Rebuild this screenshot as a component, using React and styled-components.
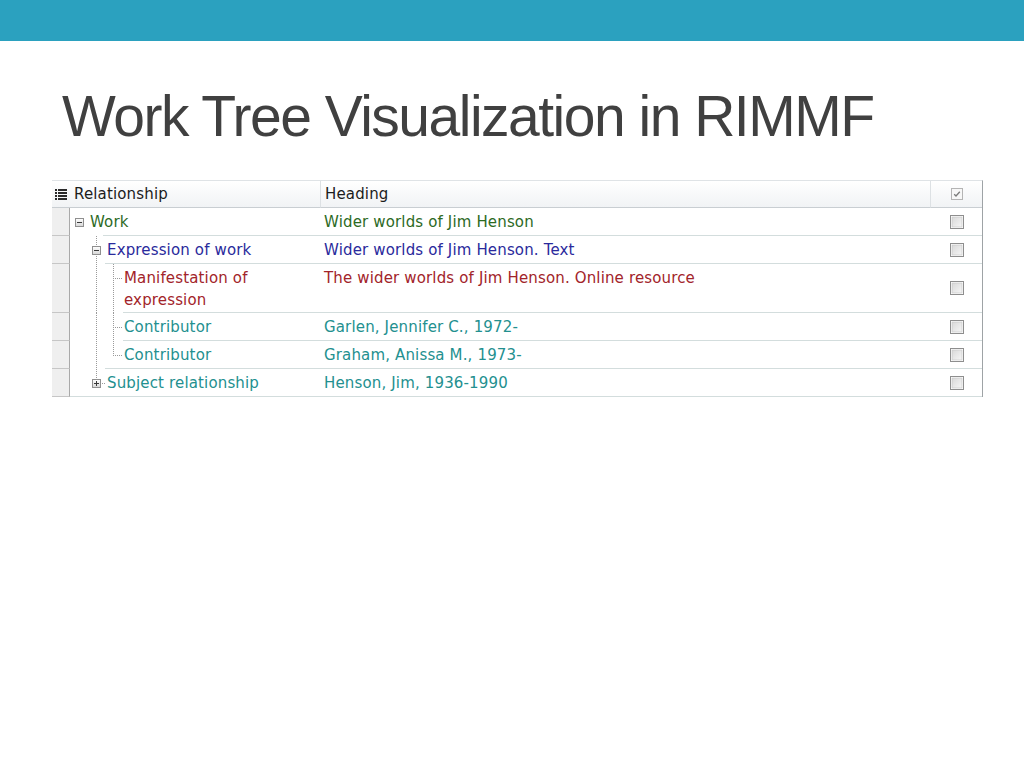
import React from "react";
import styled, { createGlobalStyle } from "styled-components";

const GlobalStyle = createGlobalStyle`
  body {
    margin: 0;
    background: #fff;
  }
`;

const Page = styled.div`
  width: 1024px;
  height: 768px;
  background: #fff;
  overflow: hidden;
`;

const TopBar = styled.div`
  height: 41px;
  background: #2ba1bf;
`;

const Title = styled.h1`
  margin: 42px 0 0 62px;
  font-family: "Liberation Sans", Arial, sans-serif;
  font-weight: 400;
  font-size: 57px;
  line-height: 66px;
  letter-spacing: -1.5px;
  color: #404040;
`;

const Grid = styled.div`
  margin: 31px 0 0 52px;
  width: 930px;
  border-top: 1px solid #dfe3e6;
  border-right: 1px solid #9ea3a6;
  font-family: "DejaVu Sans", Verdana, sans-serif;
  font-size: 15px;
  letter-spacing: 0.15px;
`;

const Row = styled.div`
  display: grid;
  grid-template-columns: 18px 250px 610px 52px;
`;

const HeadCell = styled.div`
  height: 26px;
  display: flex;
  align-items: center;
  padding-left: ${(p) => p.$pad || 0}px;
  justify-content: ${(p) => (p.$center ? "center" : "flex-start")};
  background: linear-gradient(#ffffff, #f1f3f5);
  border-bottom: 1px solid #c9ced2;
  border-left: ${(p) => (p.$sep ? "1px solid #dde1e4" : "none")};
  color: #1c1c1c;
  white-space: nowrap;
`;

const RowHead = styled.div`
  background: #efefef;
  border-bottom: 1px solid #c6c6c6;
  border-right: 1px solid #a9a9a9;
`;

const TreeCell = styled.div`
  display: flex;
  align-items: stretch;
  padding-left: 1px;
  background-image: linear-gradient(#d3dddd, #d3dddd);
  background-repeat: no-repeat;
  background-size: calc(100% - ${(p) => p.$rule}px) 1px;
  background-position: right bottom;
  color: ${(p) => p.$color};
`;

const dotV = "repeating-linear-gradient(to bottom, #9a9a9a 0 1px, transparent 1px 2px)";
const dotH = "repeating-linear-gradient(to right, #9a9a9a 0 1px, transparent 1px 2px)";

const railBg = {
  blank: "none",
  line: `${dotV}`,
  tee: `${dotH}, ${dotV}`,
  elbow: `${dotH}, ${dotV}`,
};

const railSize = {
  blank: "auto",
  line: "1px 100%",
  tee: "11px 1px, 1px 100%",
  elbow: "11px 1px, 1px 15px",
};

const railPos = {
  blank: "0 0",
  line: "8px 0",
  tee: "8px 14px, 8px 0",
  elbow: "8px 14px, 8px 0",
};

const Rail = styled.div`
  width: 17px;
  flex: none;
  display: flex;
  justify-content: center;
  align-items: flex-start;
  padding-top: 10px;
  background-image: ${(p) => railBg[p.$kind]};
  background-size: ${(p) => railSize[p.$kind]};
  background-position: ${(p) => railPos[p.$kind]};
  background-repeat: no-repeat;
`;

const Label = styled.div`
  margin-left: 2px;
  padding: 3px 0 2px;
  line-height: 22px;
  max-width: ${(p) => p.$max || 300}px;
  white-space: ${(p) => (p.$max ? "normal" : "nowrap")};
`;

const Cell = styled.div`
  padding: 3px 0 2px 4px;
  line-height: 22px;
  border-bottom: 1px solid #d3dddd;
  color: ${(p) => p.$color};
  white-space: nowrap;
`;

const CheckCell = styled.div`
  display: flex;
  justify-content: center;
  align-items: center;
  padding-left: 1px;
  border-bottom: 1px solid #d3dddd;
`;

function ListIcon() {
  return (
    <svg width="12" height="11" viewBox="0 0 12 11">
      {[1, 4, 7, 10].map((y) => (
        <g key={y} fill="#2a2a2a">
          <rect x="0" y={y - 1} width="2" height="2" />
          <rect x="3" y={y - 1} width="9" height="2" />
        </g>
      ))}
    </svg>
  );
}

function Expander({ open }) {
  return (
    <svg width="9" height="9" viewBox="0 0 9 9" style={{ display: "block" }}>
      <defs>
        <linearGradient id="expg" x1="0" y1="0" x2="0" y2="1">
          <stop offset="0" stopColor="#ffffff" />
          <stop offset="1" stopColor="#d6d6d6" />
        </linearGradient>
      </defs>
      <rect x="0.5" y="0.5" width="8" height="8" fill="url(#expg)" stroke="#8f8f8f" />
      <rect x="2" y="4" width="5" height="1" fill="#3a3a3a" />
      {!open && <rect x="4" y="2" width="1" height="5" fill="#3a3a3a" />}
    </svg>
  );
}

function Checkbox() {
  return (
    <svg width="14" height="14" viewBox="0 0 14 14">
      <defs>
        <linearGradient id="chkg" x1="0" y1="0" x2="1" y2="1">
          <stop offset="0" stopColor="#d9d9d9" />
          <stop offset="1" stopColor="#f6f6f6" />
        </linearGradient>
      </defs>
      <rect x="0.5" y="0.5" width="13" height="13" fill="#fff" stroke="#8e8e8e" />
      <rect x="2" y="2" width="10" height="10" fill="url(#chkg)" stroke="#c4c4c4" strokeWidth="0.6" />
    </svg>
  );
}

function HeaderCheck() {
  return (
    <svg width="12" height="12" viewBox="0 0 12 12">
      <rect x="0.5" y="0.5" width="11" height="11" fill="#f7f7f7" stroke="#b4b4b4" />
      <path d="M3.2 6.2 L5 8 L8.8 3.8" fill="none" stroke="#7a7a7a" strokeWidth="1.3" />
    </svg>
  );
}

const COLORS = {
  work: "#2d6a1f",
  expr: "#2a2a9c",
  manif: "#a2242a",
  contrib: "#23908f",
};

const rows = [
  {
    rails: [{ kind: "blank", exp: "open" }],
    label: "Work",
    heading: "Wider worlds of Jim Henson",
    color: COLORS.work,
    rule: 33,
  },
  {
    rails: [{ kind: "blank" }, { kind: "line", exp: "open" }],
    label: "Expression of work",
    heading: "Wider worlds of Jim Henson. Text",
    color: COLORS.expr,
    rule: 35,
  },
  {
    rails: [{ kind: "blank" }, { kind: "line" }, { kind: "tee" }],
    label: "Manifestation of expression",
    max: 150,
    heading: "The wider worlds of Jim Henson. Online resource",
    color: COLORS.manif,
    rule: 53,
  },
  {
    rails: [{ kind: "blank" }, { kind: "line" }, { kind: "tee" }],
    label: "Contributor",
    heading: "Garlen, Jennifer C., 1972-",
    color: COLORS.contrib,
    rule: 53,
  },
  {
    rails: [{ kind: "blank" }, { kind: "line" }, { kind: "elbow" }],
    label: "Contributor",
    heading: "Graham, Anissa M., 1973-",
    color: COLORS.contrib,
    rule: 35,
  },
  {
    rails: [{ kind: "blank" }, { kind: "elbow", exp: "closed" }],
    label: "Subject relationship",
    heading: "Henson, Jim, 1936-1990",
    color: COLORS.contrib,
    rule: 0,
  },
];

export default function App() {
  return (
    <Page>
      <GlobalStyle />
      <TopBar />
      <Title>Work Tree Visualization in RIMMF</Title>
      <Grid>
        <Row>
          <HeadCell $pad={3}>
            <ListIcon />
          </HeadCell>
          <HeadCell $pad={4}>Relationship</HeadCell>
          <HeadCell $sep $pad={4}>Heading</HeadCell>
          <HeadCell $sep $center>
            <HeaderCheck />
          </HeadCell>
        </Row>
        {rows.map((r, i) => (
          <Row key={i}>
            <RowHead />
            <TreeCell $rule={r.rule} $color={r.color}>
              {r.rails.map((rl, j) => (
                <Rail key={j} $kind={rl.kind}>
                  {rl.exp && <Expander open={rl.exp === "open"} />}
                </Rail>
              ))}
              <Label $max={r.max}>{r.label}</Label>
            </TreeCell>
            <Cell $color={r.color}>{r.heading}</Cell>
            <CheckCell>
              <Checkbox />
            </CheckCell>
          </Row>
        ))}
      </Grid>
    </Page>
  );
}
